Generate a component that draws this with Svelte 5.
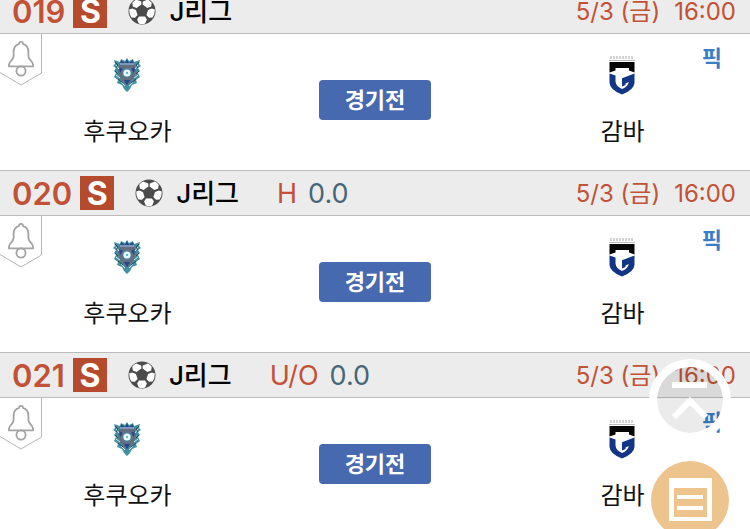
<script lang="ts">
  type Match = {
    no: string;
    league: string;
    kind?: string;
    line?: string;
    date: string;
    time: string;
    home: string;
    away: string;
    status: string;
  };

  const base = {
    league: "J리그",
    date: "5/3 (금)",
    time: "16:00",
    home: "후쿠오카",
    away: "감바",
    status: "경기전",
  };

  const matches: Match[] = [
    { ...base, no: "019" },
    { ...base, no: "020", kind: "H", line: "0.0" },
    { ...base, no: "021", kind: "U/O", line: "0.0" },
  ];
</script>

<main>
  {#each matches as match (match.no)}
    <article>
      <header>
        <span class="no">{match.no}</span>
        <span class="badge">S</span>
        <svg class="ball" viewBox="0 0 28 28" aria-hidden="true">
          <circle cx="14" cy="14" r="13.5" fill="#4b4b4b" />
          <g fill="#fff">
            <path d="M8.2 2.6 13.2 4.4 13.4 7.6 8.6 11 4.8 9.6 4.3 5.8Q6 3.7 8.2 2.6Z" />
            <path d="M19.8 2.6 14.8 4.4 14.6 7.6 19.4 11 23.2 9.6 23.7 5.8Q22 3.7 19.8 2.6Z" />
            <path d="M1.2 12.6 4.2 11.6 7.9 13 9.6 18 7 20.8 3.4 20.6Q1 17 1.2 12.6Z" />
            <path d="M26.8 12.6 23.8 11.6 20.1 13 18.4 18 21 20.8 24.6 20.6Q27 17 26.8 12.6Z" />
            <path d="M11 19.4H17L18.9 22.6 17.2 26.4Q14 27.4 10.8 26.4L9.1 22.6Z" />
          </g>
        </svg>
        <strong class="league">{match.league}</strong>
        {#if match.kind}
          <span class="kind">{match.kind}</span>
          <span class="line">{match.line}</span>
        {/if}
        <time>
          <span>{match.date}</span>
          <span>{match.time}</span>
        </time>
      </header>

      <div class="body">
        <button class="alarm" aria-label="알림">
          <svg viewBox="0 0 42 52" fill="none">
            <path d="M41.5 0V39L21 51 0 38.5" stroke="#b5b5b5" />
            <g stroke="#a3a3a3" stroke-width="1.8">
              <path d="M19 9.8Q19 7.8 21 7.8T23 9.8C27 11 28.4 14 28.4 18V22C28.4 26 33 27 33 30.5V32.4H9V30.5C9 27 13.6 26 13.6 22V18C13.6 14 15 11 19 9.8Z" />
              <circle cx="21" cy="37" r="4.6" />
            </g>
          </svg>
        </button>

        <div class="team">
          <svg class="logo" viewBox="0 0 40 40" aria-hidden="true">
            <path d="M20 2 22 5 26 3 27 6 33 4 32 8 34 10 31 12 33 15 31 17 33 21 29 24 30 27 25 29 23 33 20 36 17 33 15 29 10 27 11 24 7 21 9 17 7 15 9 12 6 10 8 8 7 4 13 6 14 3 18 5Z" fill="#4391a0" />
            <path d="M13 7H27L29 14 27 22 20 30 13 22 11 14Z" fill="#626d80" />
            <path d="M14 4 18 7 20 3 22 7 26 4 27 9H13ZM12 11 16 13 13 17ZM28 11 24 13 27 17ZM17 24H23L20 29Z" fill="#24478d" />
            <path d="M13 8H27M9 9 12 13M31 9 28 13M9 19 13 22M31 19 27 22M14 26 18 30M26 26 22 30" stroke="#dbe7ea" />
            <path d="M8 6 11 9 9 12M32 6 29 9 31 12M8 15 11 18M32 15 29 18M11 23 16 27M29 23 24 27" fill="none" stroke="#2f4654" />
            <circle cx="20" cy="17" r="5" fill="#358eae" stroke="#677386" stroke-width="1.5" />
            <circle cx="20" cy="17" r="3.6" fill="#effcfc" />
            <circle cx="20" cy="17" r="1.2" fill="#59bdca" />
          </svg>
          <span>{match.home}</span>
        </div>

        <button class="status">{match.status}</button>

        <div class="team">
          <svg class="logo" viewBox="0 0 40 40" aria-hidden="true">
            <path d="M8 1.5H32" stroke="#d2d2d2" stroke-width="3" stroke-dasharray="2 1" />
            <path d="M7 4.5H33" stroke="#bbb" />
            <path d="M7.5 6H32.5V16.5L27 14.5V12H13.5V14.5L7.5 16.5Z" fill="#050505" />
            <path d="M7.5 17.5 13.5 19.5V25.5Q14 30.5 20 33 26 30.5 26.8 26L23.5 27.4V29L20 30.4V22.2L32.5 17.5V27Q32 34 20 38.5 8 34 7.5 27Z" fill="#123585" />
          </svg>
          <span>{match.away}</span>
        </div>

        <a class="pick" href="#pick">픽</a>
      </div>
    </article>
  {/each}

  <button class="top" aria-label="맨 위로">
    <svg viewBox="0 0 82 82" fill="none" stroke="#fff" stroke-width="6">
      <path d="M23 26H58" />
      <path d="M25 58 41 42 57 58" />
    </svg>
  </button>
  <button class="list" aria-label="목록">
    <svg viewBox="0 0 78 78" fill="#fff">
      <path fill-rule="evenodd" d="M18 17H61V60H18ZM23 27V56H56V27Z" />
      <path d="M26 34H52V38H26ZM26 45H52V49H26Z" />
    </svg>
  </button>
</main>

<style>
  :global(body) {
    background: #fff;
  }

  main {
    height: 100vh;
    overflow: hidden;
    font-family: Inter, "Noto Sans CJK KR", sans-serif;
    color: #111;
  }

  button {
    padding: 0;
    border: 0;
    background: none;
    font-family: inherit;
  }

  svg {
    display: block;
  }

  /* the list is scrolled a little past its first header */
  article:first-child {
    margin-top: -12px;
  }

  header {
    display: flex;
    align-items: center;
    box-sizing: border-box;
    height: 46px;
    padding: 0 14px 0 12px;
    border-top: 1px solid #bbb;
    border-bottom: 1px solid #bbb;
    background: #ececec;
    line-height: 40px;
    white-space: nowrap;
  }

  .no,
  .league,
  .kind,
  .line,
  time {
    padding-top: 2px;
  }

  .no {
    color: #c25135;
    font-size: 31px;
    font-weight: 600;
  }

  .badge {
    width: 34px;
    height: 34px;
    margin-left: 8px;
    background: #b64a2d;
    color: #fff;
    font-size: 32px;
    font-weight: 700;
    line-height: 36px;
    text-align: center;
  }

  .ball {
    width: 28px;
    height: 28px;
    margin-left: 21px;
  }

  .league {
    margin-left: 13px;
    color: #000;
    font-size: 26px;
    font-weight: 500;
  }

  .kind {
    margin-left: 38px;
    color: #c25135;
    font-size: 27px;
  }

  .line {
    margin-left: 11px;
    color: #456779;
    font-size: 27px;
  }

  time {
    display: flex;
    gap: 14px;
    margin-left: auto;
    color: #c25135;
    font-size: 24px;
  }

  .body {
    position: relative;
    display: grid;
    grid-template-columns: 34fr 32fr 34fr;
    justify-items: center;
    align-items: start;
    height: 136px;
  }

  .alarm {
    position: absolute;
    top: 0;
    left: 0;
    width: 42px;
    height: 52px;
  }

  .team {
    display: flex;
    flex-direction: column;
    align-items: center;
    gap: 18px;
    padding-top: 22px;
    font-size: 24px;
    line-height: 36px;
  }

  .logo {
    width: 40px;
    height: 40px;
  }

  .status {
    width: 112px;
    height: 40px;
    margin-top: 46px;
    padding-bottom: 4px;
    border-radius: 4px;
    background: #4769b0;
    color: #fff;
    font-size: 22px;
    font-weight: 700;
  }

  .pick {
    position: absolute;
    top: 8px;
    right: 28px;
    color: #3a7fc6;
    font-size: 22px;
    font-weight: 700;
    line-height: 32px;
    text-decoration: none;
  }

  .top {
    position: fixed;
    right: 19px;
    bottom: 88px;
    box-sizing: border-box;
    width: 82px;
    height: 82px;
    border: 8px solid #fff;
    border-radius: 50%;
    background: rgba(0, 0, 0, 0.08);
    background-clip: padding-box;
  }

  .top svg {
    width: 82px;
    height: 82px;
    margin: -8px;
  }

  .list {
    position: fixed;
    right: 21px;
    bottom: -10px;
    width: 78px;
    height: 78px;
    border-radius: 50%;
    background: #eec48e;
  }
</style>
